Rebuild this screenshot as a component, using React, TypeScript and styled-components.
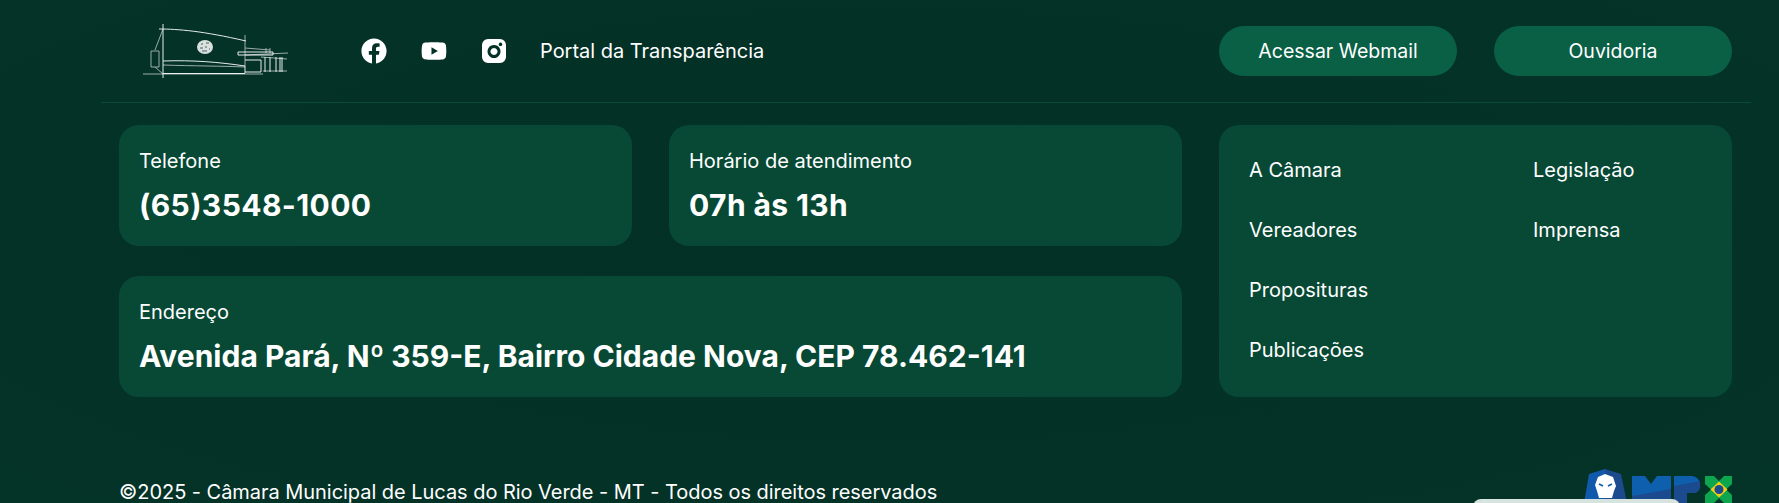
import React from "react";
import styled, { createGlobalStyle } from "styled-components";
import { FaFacebook, FaYoutube } from "react-icons/fa";

const GlobalStyle = createGlobalStyle`
  html, body {
    margin: 0;
    padding: 0;
    height: 503px;
    overflow: hidden;
    background: #043227;
  }
  * {
    box-sizing: border-box;
  }
`;

const Footer = styled.footer`
  height: 503px;
  overflow: hidden;
  padding-left: 101px;
  background: radial-gradient(ellipse at 50% 45%, #033025 0%, #043328 100%);
  color: #fff;
  font-family: Inter, "Noto Sans", sans-serif;
`;

const TopBar = styled.div`
  width: 1650px;
  height: 103px;
  padding: 0 19px 0 18px;
  display: flex;
  align-items: center;
  border-bottom: 1px solid #0a4a39;
`;

const Brand = styled.div`
  width: 146px;
  margin-left: 24px;
  display: flex;
`;

const Socials = styled.nav`
  margin-left: 72px;
  display: flex;
  align-items: center;
  gap: 34px;
  flex: 1;
`;

const SocialLink = styled.a`
  width: 26px;
  height: 26px;
  display: flex;
  align-items: center;
  justify-content: center;
  color: #fff;
`;

const TextLink = styled.a`
  font-size: 20px;
  letter-spacing: -0.02px;
  margin-left: -1px;
  color: #fff;
`;

const Buttons = styled.div`
  display: flex;
  gap: 37px;
`;

const PillButton = styled.a`
  width: 238px;
  height: 50px;
  border-radius: 25px;
  background: #096045;
  color: #fff;
  font-size: 19.5px;
  display: flex;
  align-items: center;
  justify-content: center;
`;

const Main = styled.div`
  width: 1613px;
  margin: 22px 0 0 18px;
  display: grid;
  grid-template-columns: repeat(3, 513px);
  grid-template-rows: 121px 121px;
  column-gap: 37px;
  row-gap: 30px;
`;

const InfoCard = styled.div<{ $wide?: boolean }>`
  grid-column: ${({ $wide }) => ($wide ? "1 / span 2" : "auto")};
  background: #074935;
  border-radius: 20px;
  padding: 24px 20px;
`;

const InfoLabel = styled.div`
  font-size: 20px;
  line-height: 24px;
`;

const InfoValue = styled.div<{ $spaced?: boolean }>`
  font-size: 30px;
  line-height: 36px;
  font-weight: 700;
  margin-top: 14px;
  letter-spacing: ${({ $spaced }) => ($spaced ? "0.4px" : "0")};
`;

const MenuPanel = styled.div`
  grid-column: 3;
  grid-row: 1 / span 2;
  background: #074935;
  border-radius: 20px;
  padding: 33px 30px;
  display: grid;
  grid-template-columns: 284px 1fr;
  align-items: start;
`;

const MenuColumn = styled.div`
  display: flex;
  flex-direction: column;
  gap: 36px;
`;

const MenuLink = styled.a`
  font-size: 20px;
  line-height: 24px;
`;

const BottomBar = styled.div`
  width: 1613px;
  margin: 83px 0 0 18px;
  display: flex;
  justify-content: space-between;
  align-items: flex-start;
`;

const Copyright = styled.div`
  font-size: 20px;
  line-height: 24px;
  letter-spacing: -0.04px;
`;

const MpxLogo = styled.svg`
  display: block;
  margin-top: -11px;
`;

const Widget = styled.div`
  position: absolute;
  left: 1473px;
  top: 499px;
  width: 207px;
  height: 20px;
  border-radius: 8px 8px 0 0;
  background: #d6e3de;
`;

const CityHallSketch = () => (
  <svg width="146" height="54" viewBox="0 0 146 54" fill="none" stroke="#fff" strokeWidth="1">
    <g opacity="0.6">
      <path d="M0 50 H120" />
      <path d="M20 5 L12 26 M8 27 H16 V43 H8 Z M12 43 L20 50" />
      <path d="M20 41 C50 42 80 42 102 43" />
      <path d="M102 11 V42" />
      <path d="M102 24 L127 26 M102 31 L145 29 M118 33 L144 35 M120 47 H144" />
      <path d="M123 24 V29 M127 24 V29" />
    </g>
    <g opacity="0.9">
      <path d="M20 0 V54" />
      <path d="M16 5 C35 5 60 7 103 17" />
      <path d="M20 37 C50 36 75 38 102 42 V49" />
      <path d="M20 49.5 H102" />
      <path d="M95 28 H130 V31 H95 Z" />
      <path d="M102 36 H118 V48 H102" />
      <path d="M122 33 V48 M127 33 V48 M133 33 V48 M137 33 V48 M139 33 V48" />
    </g>
    <ellipse cx="62" cy="23" rx="8" ry="7" fill="#fff" stroke="none" opacity="0.85" />
    <path d="M58 20 h2 M63 19 h3 M57 24 h3 M62 23 h2 M66 25 h1 M59 27 h5" stroke="#043227" strokeWidth="0.7" />
  </svg>
);

const InstagramIcon = () => (
  <svg width="24" height="24" viewBox="0 0 24 24" fill="#fff">
    <path
      fillRule="evenodd"
      d="M6 0 H18 A6 6 0 0 1 24 6 V18 A6 6 0 0 1 18 24 H6 A6 6 0 0 1 0 18 V6 A6 6 0 0 1 6 0 Z M12 6 A6.5 6.5 0 1 0 12.01 6 Z M12 9 A3.5 3.5 0 1 1 11.99 9 Z M18.5 3.5 A1.8 1.8 0 1 0 18.51 3.5 Z"
    />
  </svg>
);

const MpxMark = () => (
  <MpxLogo width="148" height="34" viewBox="0 0 148 34">
    <path d="M21 0 L5 5 L0 34 H21 Z" fill="#1059ab" />
    <path d="M21 0 L37 5 L43 34 H21 Z" fill="#1c4a8e" />
    <path d="M14 8 L21 5 L29 8 L32 17 L30 22 L28 29 H15 L13 22 L11 16 Z" fill="#fff" />
    <path d="M15 15 L19 17 M28 15 L24 17" stroke="#1059ab" strokeWidth="1.6" />
    <path d="M48 7 H61 L67 15 L73 7 H87 V34 H48 Z" fill="#0e60ae" />
    <path d="M48 27 L87 20 V34 H48 Z" fill="#1c4a8e" />
    <path d="M90 7 H108 A8.5 8.5 0 0 1 116 15 V18 A6.5 6.5 0 0 1 109 24 H103 V34 H90 Z" fill="#0e60ae" />
    <path d="M90 17 L116 12 V18 A6.5 6.5 0 0 1 109 24 H103 V34 H90 Z" fill="#1c4a8e" />
    <path
      d="M121 7 H130 L135 12 L140 7 H148 V15 L142 20.5 L148 26 V34 H140 L135 29 L130 34 H121 V26 L127 20.5 L121 15 Z"
      fill="#0da64f"
    />
    <path d="M135 12.5 L143.5 20.5 L135 28.5 L126.5 20.5 Z" fill="#f5cf12" />
    <circle cx="135" cy="20.5" r="4.5" fill="#1c4a8e" />
  </MpxLogo>
);

const App: React.FC = () => {
  return (
    <>
      <GlobalStyle />
      <Footer>
        <TopBar>
          <Brand>
            <CityHallSketch />
          </Brand>
          <Socials>
            <SocialLink>
              <FaFacebook size={26} />
            </SocialLink>
            <SocialLink>
              <FaYoutube size={26} />
            </SocialLink>
            <SocialLink>
              <InstagramIcon />
            </SocialLink>
            <TextLink>Portal da Transparência</TextLink>
          </Socials>
          <Buttons>
            <PillButton>Acessar Webmail</PillButton>
            <PillButton>Ouvidoria</PillButton>
          </Buttons>
        </TopBar>
        <Main>
          <InfoCard>
            <InfoLabel>Telefone</InfoLabel>
            <InfoValue $spaced>(65)3548-1000</InfoValue>
          </InfoCard>
          <InfoCard>
            <InfoLabel>Horário de atendimento</InfoLabel>
            <InfoValue $spaced>07h às 13h</InfoValue>
          </InfoCard>
          <MenuPanel>
            <MenuColumn>
              <MenuLink>A Câmara</MenuLink>
              <MenuLink>Vereadores</MenuLink>
              <MenuLink>Proposituras</MenuLink>
              <MenuLink>Publicações</MenuLink>
            </MenuColumn>
            <MenuColumn>
              <MenuLink>Legislação</MenuLink>
              <MenuLink>Imprensa</MenuLink>
            </MenuColumn>
          </MenuPanel>
          <InfoCard $wide>
            <InfoLabel>Endereço</InfoLabel>
            <InfoValue>Avenida Pará, Nº 359-E, Bairro Cidade Nova, CEP 78.462-141</InfoValue>
          </InfoCard>
        </Main>
        <BottomBar>
          <Copyright>©2025 - Câmara Municipal de Lucas do Rio Verde - MT - Todos os direitos reservados</Copyright>
          <MpxMark />
        </BottomBar>
        <Widget />
      </Footer>
    </>
  );
};

export default App;
